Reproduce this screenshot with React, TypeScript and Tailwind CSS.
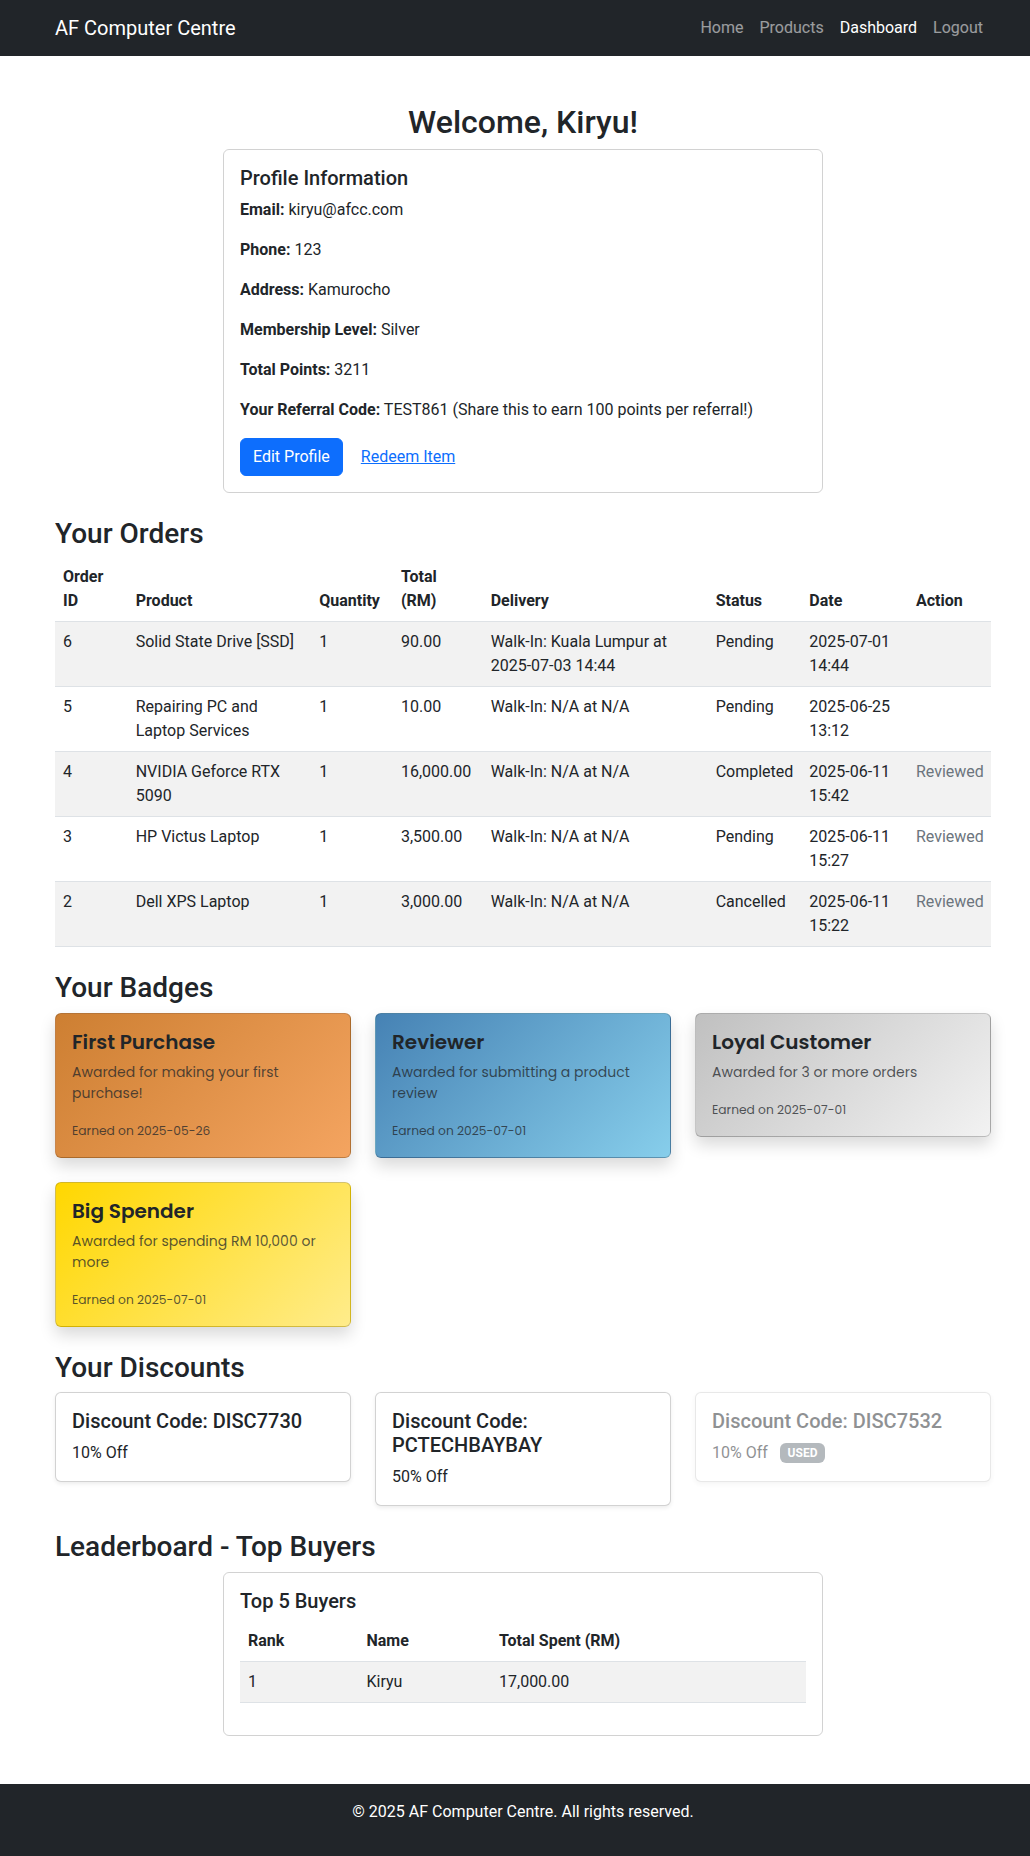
import React from 'react';

const navLinks = [
  { label: 'Home', active: false },
  { label: 'Products', active: false },
  { label: 'Dashboard', active: true },
  { label: 'Logout', active: false },
];

const profile = [
  { label: 'Email:', value: 'kiryu@afcc.com' },
  { label: 'Phone:', value: '123' },
  { label: 'Address:', value: 'Kamurocho' },
  { label: 'Membership Level:', value: 'Silver' },
  { label: 'Total Points:', value: '3211' },
  { label: 'Your Referral Code:', value: 'TEST861 (Share this to earn 100 points per referral!)' },
];

const orders = [
  { id: 6, product: 'Solid State Drive [SSD]', qty: 1, total: '90.00', delivery: 'Walk-In: Kuala Lumpur at 2025-07-03 14:44', status: 'Pending', date: '2025-07-01 14:44', action: '' },
  { id: 5, product: 'Repairing PC and Laptop Services', qty: 1, total: '10.00', delivery: 'Walk-In: N/A at N/A', status: 'Pending', date: '2025-06-25 13:12', action: '' },
  { id: 4, product: 'NVIDIA Geforce RTX 5090', qty: 1, total: '16,000.00', delivery: 'Walk-In: N/A at N/A', status: 'Completed', date: '2025-06-11 15:42', action: 'Reviewed' },
  { id: 3, product: 'HP Victus Laptop', qty: 1, total: '3,500.00', delivery: 'Walk-In: N/A at N/A', status: 'Pending', date: '2025-06-11 15:27', action: 'Reviewed' },
  { id: 2, product: 'Dell XPS Laptop', qty: 1, total: '3,000.00', delivery: 'Walk-In: N/A at N/A', status: 'Cancelled', date: '2025-06-11 15:22', action: 'Reviewed' },
];

const badges = [
  { title: 'First Purchase', desc: 'Awarded for making your first purchase!', earned: '2025-05-26', bg: 'bg-[linear-gradient(135deg,#cd7f32,#f4a460)]' },
  { title: 'Reviewer', desc: 'Awarded for submitting a product review', earned: '2025-07-01', bg: 'bg-[linear-gradient(135deg,#4682b4,#87ceeb)]' },
  { title: 'Loyal Customer', desc: 'Awarded for 3 or more orders', earned: '2025-07-01', bg: 'bg-[linear-gradient(135deg,#c0c0c0,#f2f2f2)]' },
  { title: 'Big Spender', desc: 'Awarded for spending RM 10,000 or more', earned: '2025-07-01', bg: 'bg-[linear-gradient(135deg,#ffd700,#ffec8b)]' },
];

const discounts = [
  { code: 'DISC7730', off: '10% Off', used: false },
  { code: 'PCTECHBAYBAY', off: '50% Off', used: false },
  { code: 'DISC7532', off: '10% Off', used: true },
];

const container = 'ml-[43px] w-[960px] px-3';
const sectionTitle = 'mt-6 mb-2 text-[28px] leading-[1.2] font-medium';
const cell = 'p-2 align-top border-b border-[#dee2e6]';
const head = 'p-2 align-bottom text-left font-bold border-b border-[#dee2e6]';

export default function App() {
  return (
    <div className="min-h-screen bg-white font-['Roboto','Segoe_UI',sans-serif] text-base leading-6 text-[#212529]">
      {/* Navbar */}
      <nav className="bg-[#212529] py-2">
        <div className={`${container} flex items-center justify-between`}>
          <a href="#" className="py-[5px] text-[20px] leading-[30px] text-white">
            AF Computer Centre
          </a>
          <ul className="flex">
            {navLinks.map((l) => (
              <li key={l.label}>
                <a href="#" className={`block px-2 py-2 ${l.active ? 'text-white' : 'text-white/55'}`}>
                  {l.label}
                </a>
              </li>
            ))}
          </ul>
        </div>
      </nav>

      <main className={`${container} mt-[47px] mb-12`}>
        <h2 className="mb-2 text-center text-[32px] leading-[1.2] font-medium">Welcome, Kiryu!</h2>

        {/* Profile */}
        <div className="mx-auto w-[600px] rounded-md border border-black/[0.175] p-4">
          <h5 className="mb-2 text-[20px] leading-[1.2] font-medium">Profile Information</h5>
          {profile.map((p) => (
            <p key={p.label} className="mb-4">
              <strong className="font-bold">{p.label}</strong> {p.value}
            </p>
          ))}
          <div className="flex items-center">
            <button className="rounded-md border border-[#0d6efd] bg-[#0d6efd] px-3 py-1.5 text-white">Edit Profile</button>
            <a href="#" className="ml-[6px] px-3 py-1.5 text-[#0d6efd] underline">
              Redeem Item
            </a>
          </div>
        </div>

        {/* Orders */}
        <h3 className="mt-6 mb-[6px] text-[28px] leading-[1.2] font-medium">Your Orders</h3>
        <table className="w-full table-fixed border-collapse">
          <colgroup>
            <col className="w-[72.7px]" />
            <col className="w-[183.6px]" />
            <col className="w-[81.7px]" />
            <col className="w-[89.7px]" />
            <col className="w-[225px]" />
            <col className="w-[93.6px]" />
            <col className="w-[106.7px]" />
            <col className="w-[83px]" />
          </colgroup>
          <thead>
            <tr>
              <th className={head}>Order<br />ID</th>
              <th className={head}>Product</th>
              <th className={`${head} whitespace-nowrap`}>Quantity</th>
              <th className={head}>Total<br />(RM)</th>
              <th className={head}>Delivery</th>
              <th className={head}>Status</th>
              <th className={head}>Date</th>
              <th className={head}>Action</th>
            </tr>
          </thead>
          <tbody>
            {orders.map((o, i) => (
              <tr key={o.id} className={i % 2 === 0 ? 'bg-[#f2f2f2]' : ''}>
                <td className={cell}>{o.id}</td>
                <td className={cell}>{o.product}</td>
                <td className={cell}>{o.qty}</td>
                <td className={cell}>{o.total}</td>
                <td className={cell}>{o.delivery}</td>
                <td className={`${cell} whitespace-nowrap`}>{o.status}</td>
                <td className={cell}>{o.date}</td>
                <td className={`${cell} text-[#6c757d]`}>{o.action}</td>
              </tr>
            ))}
          </tbody>
        </table>

        {/* Badges */}
        <h3 className={sectionTitle}>Your Badges</h3>
        <div className="grid grid-cols-3 items-start gap-6 font-['Poppins','Open_Sans',sans-serif]">
          {badges.map((b) => (
            <div
              key={b.title}
              className={`${b.bg} rounded-md border border-black/[0.175] p-4 shadow-[0_0.5rem_1rem_rgba(0,0,0,0.15)]`}
            >
              <h5 className="mb-2 text-[20px] leading-[1.2] font-semibold text-[#212529]">{b.title}</h5>
              <p className="mb-4 text-[14px] leading-[21px] text-[#212529]/75">{b.desc}</p>
              <p className="text-[14px] leading-[21px] text-[#212529]/75">
                <small className="text-[12.25px]">Earned on {b.earned}</small>
              </p>
            </div>
          ))}
        </div>

        {/* Discounts */}
        <h3 className={sectionTitle}>Your Discounts</h3>
        <div className="grid grid-cols-3 items-start gap-6">
          {discounts.map((d) => (
            <div
              key={d.code}
              className={`rounded-md border border-black/[0.175] bg-white p-4 shadow-[0_0.125rem_0.25rem_rgba(0,0,0,0.075)] ${d.used ? 'opacity-50' : ''}`}
            >
              <h5 className="mb-2 text-[20px] leading-[1.2] font-medium">Discount Code: {d.code}</h5>
              <p>
                {d.off}
                {d.used && (
                  <span className="ml-3 inline-block rounded-md bg-[#6c757d] px-[0.65em] py-[0.35em] align-[1px] text-[12px] leading-none font-bold text-white">
                    USED
                  </span>
                )}
              </p>
            </div>
          ))}
        </div>

        {/* Leaderboard */}
        <h3 className={sectionTitle}>Leaderboard - Top Buyers</h3>
        <div className="mx-auto w-[600px] rounded-md border border-black/[0.175] p-4">
          <h5 className="mb-2 text-[20px] leading-[1.2] font-medium">Top 5 Buyers</h5>
          <table className="mb-4 w-full border-collapse">
            <colgroup>
              <col className="w-[118.5px]" />
              <col className="w-[132.5px]" />
              <col />
            </colgroup>
            <thead>
              <tr>
                <th className={head}>Rank</th>
                <th className={head}>Name</th>
                <th className={head}>Total Spent (RM)</th>
              </tr>
            </thead>
            <tbody>
              <tr className="bg-[#f2f2f2]">
                <td className={cell}>1</td>
                <td className={cell}>Kiryu</td>
                <td className={cell}>17,000.00</td>
              </tr>
            </tbody>
          </table>
        </div>
      </main>

      <footer className="bg-[#212529] pt-4 pb-8 text-white">
        <div className={`${container} text-center`}>
          <p>© 2025 AF Computer Centre. All rights reserved.</p>
        </div>
      </footer>
    </div>
  );
}
